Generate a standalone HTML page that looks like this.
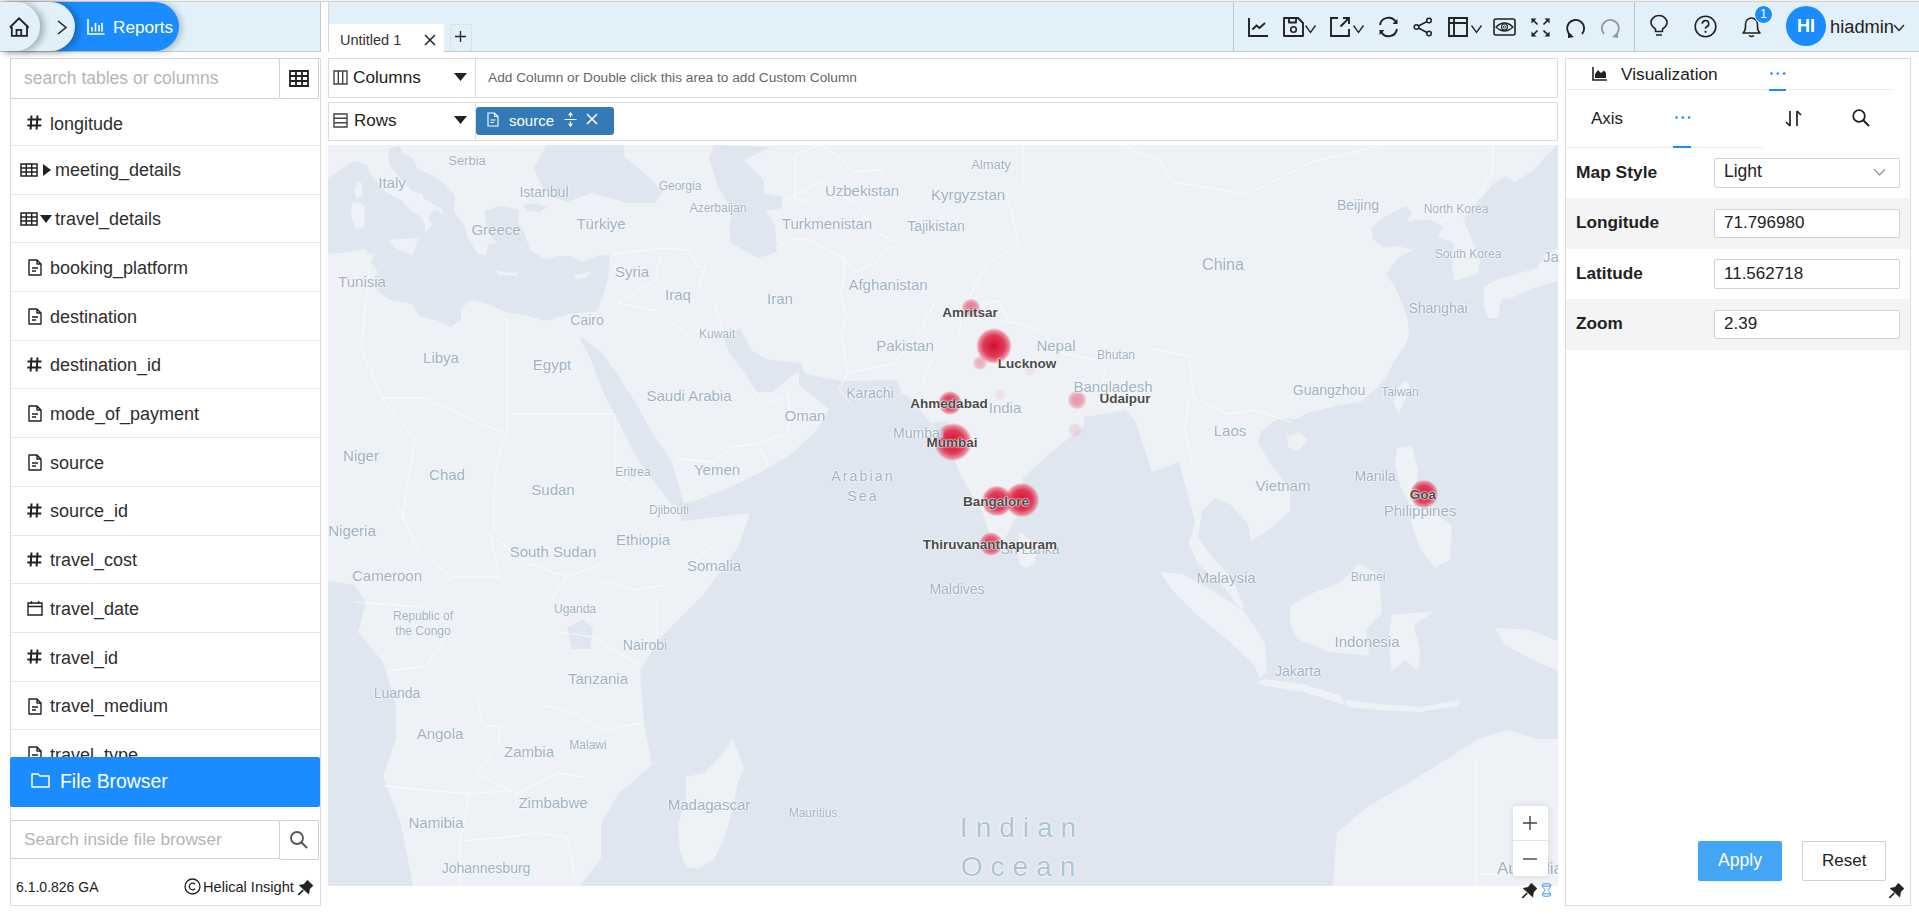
<!DOCTYPE html>
<html><head><meta charset="utf-8">
<style>
*{box-sizing:border-box;margin:0;padding:0}
html,body{width:1919px;height:914px;overflow:hidden;background:#fff;font-family:"Liberation Sans",sans-serif;color:#222;position:relative}
.a{position:absolute}
.t{white-space:nowrap;line-height:1}
svg{display:block;overflow:visible}
.ml{position:absolute;white-space:nowrap;line-height:1;color:#9db1c3;font-size:14px;text-shadow:0 0 2px #fff,0 0 2px #fff,0 0 1px #fff}
.cl{position:absolute;white-space:nowrap;line-height:1;color:#4a4a4a;font-size:13.5px;font-weight:bold;text-shadow:0 0 2px #fff,0 0 2px #fff,0 0 1px #fff}
</style></head><body>
<!-- TOP BAR -->
<div class="a" style="left:0;top:0;width:1919px;height:1px;background:#f2f2f2"></div>
<div class="a" style="left:0;top:1px;width:1919px;height:1px;background:#d4d4d4"></div>
<div class="a" style="left:0;top:2px;width:1919px;height:49px;background:#e1f0f9"></div>
<div class="a" style="left:0;top:51px;width:1919px;height:1px;background:#c9c9c9"></div>

<!-- breadcrumb -->
<div class="a" style="left:20px;top:2px;width:159px;height:49px;background:#1a8cff;border-radius:0 25px 25px 0;box-shadow:3px 1px 6px rgba(0,0,0,.22)"></div>
<div class="a" style="left:0;top:2px;width:75px;height:49px;background:#e1f0f9;border-radius:0 25px 25px 0;box-shadow:4px 1px 7px rgba(0,0,0,.28)"></div>
<div class="a" style="left:0;top:2px;width:40px;height:49px;background:#e1f0f9;border-radius:0 25px 25px 0;box-shadow:4px 1px 7px rgba(0,0,0,.28)"></div>
<div class="a" style="left:9px;top:17px"><svg width="21" height="20" viewBox="0 0 21 20"><path d="M0.9 10.5L10 1.3L19.6 10.5 M0.9 10.5H3 M17.3 10.5H19.6 M2.8 10V18.8H18V10 M7.5 18.8V12.8H12.2V18.8" stroke="#222" stroke-width="1.8" fill="none" stroke-linejoin="miter"/></svg></div>
<div class="a" style="left:57px;top:20px"><svg width="10" height="15" viewBox="0 0 10 15"><path d="M1 1L9 7.5L1 14" stroke="#222" stroke-width="1.5" fill="none"/></svg></div>
<div class="a" style="left:87px;top:19px"><svg width="18" height="16" viewBox="0 0 18 16"><path d="M1 0V15H17.5 M5 8V12.5 M8.5 4V12.5 M12 6V12.5 M15 4V12.5" stroke="#fff" stroke-width="1.6" fill="none"/></svg></div>
<div class="a t" style="left:113px;top:19px;font-size:17.2px;color:#fff">Reports</div>

<!-- TABS -->
<div class="a" style="left:320px;top:2px;width:1px;height:49px;background:#c8c8c8"></div>
<div class="a" style="left:321px;top:2px;width:7px;height:50px;background:#fff"></div>
<div class="a" style="left:328px;top:2px;width:1px;height:50px;background:#d8d8d8"></div>
<div class="a" style="left:329px;top:24px;width:115px;height:28px;background:#fff;border-radius:3px 3px 0 0"></div>
<div class="a t" style="left:340px;top:33px;font-size:14.5px;color:#333">Untitled 1</div>
<div class="a" style="left:424px;top:34px"><svg width="12" height="12" viewBox="0 0 12 12"><path d="M1 1L11 11M11 1L1 11" stroke="#222" stroke-width="1.5"/></svg></div>
<div class="a" style="left:450px;top:24px;width:22px;height:27px;border:1px solid #d6e3ec;border-bottom:none"></div>
<div class="a" style="left:455px;top:31px"><svg width="11" height="11" viewBox="0 0 11 11"><path d="M5.5 0V11M0 5.5H11" stroke="#222" stroke-width="1.3"/></svg></div>

<!-- toolbar dividers -->
<div class="a" style="left:1233px;top:2px;width:1px;height:49px;background:#c4c4c4"></div>
<div class="a" style="left:1634px;top:2px;width:1px;height:49px;background:#c4c4c4"></div>
<!-- TOOLBAR ICONS -->
<div class="a" style="left:1248px;top:18px"><svg width="21" height="19" viewBox="0 0 21 19"><path d="M1 0V18H20 M4.5 11.5L8.5 7.5L11.5 10L17 5" stroke="#222" stroke-width="1.9" fill="none"/></svg></div>
<div class="a" style="left:1283px;top:17px"><svg width="33" height="20" viewBox="0 0 33 20"><path d="M1 1H15L20 6V19H1Z M6 1V5.5H13V1" stroke="#222" stroke-width="1.9" fill="none" stroke-linejoin="round"/><circle cx="10.5" cy="12.5" r="2.8" stroke="#222" stroke-width="1.6" fill="none"/><path d="M22.5 8.5L27.5 15.5L32.5 8.5" stroke="#222" stroke-width="1.3" fill="none"/></svg></div>
<div class="a" style="left:1330px;top:17px"><svg width="34" height="20" viewBox="0 0 34 20"><path d="M8 1H1V19H19V12 M10.5 9.5L19 1 M13 1H19V7" stroke="#222" stroke-width="1.9" fill="none"/><path d="M23.5 8.5L28.5 15.5L33.5 8.5" stroke="#222" stroke-width="1.3" fill="none"/></svg></div>
<div class="a" style="left:1377px;top:16px"><svg width="23" height="22" viewBox="0 0 23 22"><path d="M3 9A8.5 8.5 0 0 1 19 6.5 M20 13A8.5 8.5 0 0 1 4 15.5" stroke="#222" stroke-width="1.9" fill="none"/><path d="M20.5 3V8H15.5Z M2.5 19V14H7.5Z" fill="#222"/></svg></div>
<div class="a" style="left:1413px;top:17px"><svg width="20" height="20" viewBox="0 0 20 20"><circle cx="16" cy="3.5" r="2.3" stroke="#222" stroke-width="1.5" fill="none"/><circle cx="3.5" cy="10" r="2.3" stroke="#222" stroke-width="1.5" fill="none"/><circle cx="16" cy="16.5" r="2.3" stroke="#222" stroke-width="1.5" fill="none"/><path d="M5.5 9L14 4.5 M5.5 11L14 15.5" stroke="#222" stroke-width="1.5"/></svg></div>
<div class="a" style="left:1448px;top:17px"><svg width="34" height="20" viewBox="0 0 34 20"><path d="M1 1H19V19H1Z M1 6H19 M6 1V19" stroke="#222" stroke-width="1.9" fill="none"/><path d="M23.5 8.5L28.5 15.5L33.5 8.5" stroke="#222" stroke-width="1.3" fill="none"/></svg></div>
<div class="a" style="left:1493px;top:18px"><svg width="23" height="18" viewBox="0 0 23 18"><rect x="1" y="1" width="21" height="16" rx="2" stroke="#222" stroke-width="1.6" fill="none"/><path d="M3 9Q11.5 1 20 9Q11.5 17 3 9Z" stroke="#222" stroke-width="1.3" fill="none"/><circle cx="11.5" cy="9" r="3" stroke="#222" stroke-width="1.1" fill="none"/><circle cx="11.5" cy="9" r="1.2" stroke="#222" stroke-width=".8" fill="none"/></svg></div>
<div class="a" style="left:1531px;top:18px"><svg width="19" height="19" viewBox="0 0 19 19"><path d="M1 1L6.5 6.5 M18 1L12.5 6.5 M1 18L6.5 12.5 M18 18L12.5 12.5" stroke="#222" stroke-width="1.7"/><path d="M0.5 0.5H5.5L0.5 5.5Z M18.5 0.5H13.5L18.5 5.5Z M0.5 18.5H5.5L0.5 13.5Z M18.5 18.5H13.5L18.5 13.5Z" fill="#222"/></svg></div>
<div class="a" style="left:1565px;top:18px"><svg width="21" height="20" viewBox="0 0 21 20"><path d="M6 17.5A8.5 8.5 0 1 1 17 16" stroke="#222" stroke-width="1.9" fill="none"/><path d="M3 14L9 19L3 20Z" fill="#222"/></svg></div>
<div class="a" style="left:1600px;top:18px"><svg width="21" height="20" viewBox="0 0 21 20"><path d="M15 17.5A8.5 8.5 0 1 0 4 16" stroke="#999" stroke-width="1.9" fill="none"/><path d="M18 14L12 19L18 20Z" fill="#999"/></svg></div>
<div class="a" style="left:1650px;top:15px"><svg width="18" height="23" viewBox="0 0 18 23"><path d="M5.5 16.5V14Q1 11 1 7.5A8 7 0 0 1 17 7.5Q17 11 12.5 14V16.5Z M6 20H12" stroke="#222" stroke-width="1.6" fill="none" stroke-linejoin="round"/></svg></div>
<div class="a" style="left:1694px;top:15px"><svg width="23" height="23" viewBox="0 0 23 23"><circle cx="11.5" cy="11.5" r="10.3" stroke="#222" stroke-width="1.6" fill="none"/><path d="M8.3 8.8A3.2 3.2 0 1 1 12.5 11.8Q11.5 12.3 11.5 13.8" stroke="#222" stroke-width="1.6" fill="none"/><circle cx="11.5" cy="16.8" r="1.1" fill="#222"/></svg></div>
<div class="a" style="left:1742px;top:15px"><svg width="19" height="23" viewBox="0 0 19 23"><path d="M1 18H18Q15.5 16 15.5 12V9A6 6 0 0 0 3.5 9V12Q3.5 16 1 18Z M7 20.5Q9.5 22.5 12 20.5" stroke="#222" stroke-width="1.6" fill="none" stroke-linejoin="round"/></svg></div>
<div class="a" style="left:1754px;top:5px;width:19px;height:19px;border-radius:50%;background:#1a8cff;border:1.5px solid #fff"></div>
<div class="a t" style="left:1754px;top:8px;width:19px;text-align:center;font-size:12.5px;color:#fff">1</div>
<div class="a" style="left:1786px;top:6px;width:40px;height:40px;border-radius:50%;background:#1a8cff"></div>
<div class="a t" style="left:1786px;top:17px;width:40px;text-align:center;font-size:18px;font-weight:bold;color:#fff">HI</div>
<div class="a t" style="left:1830px;top:18px;font-size:18.3px;color:#222">hiadmin</div>
<div class="a" style="left:1893px;top:24px"><svg width="12" height="8" viewBox="0 0 12 8"><path d="M1 1L6 6.5L11 1" stroke="#222" stroke-width="1.3" fill="none"/></svg></div>
<!-- LEFT PANEL -->
<div class="a" style="left:10px;top:58px;width:311px;height:848px;border:1px solid #dcdcdc;background:#fff"></div>
<div class="a" style="left:10px;top:58px;width:270px;height:41px;border:1px solid #d2d2d2;border-radius:2px"></div>
<div class="a t" style="left:24px;top:70px;font-size:17.5px;color:#b5b5b5">search tables or columns</div>
<div class="a" style="left:279px;top:58px;width:40px;height:41px;border:1px solid #d2d2d2;border-radius:2px"></div>
<div class="a" style="left:289px;top:70px"><svg width="20" height="17" viewBox="0 0 20 17"><path d="M1 1H19V16H1Z M1 6H19 M1 11H19 M7 1V16 M13 1V16" stroke="#222" stroke-width="1.8" fill="none"/></svg></div>
<div class="a" style="left:27px;top:115px"><svg width="15" height="15" viewBox="0 0 15 15"><path d="M4.5 0.5L3.6 14.5M10.5 0.5L9.6 14.5M0.5 4.6H14.5M0.3 10.4H14.3" stroke="#222" stroke-width="2" fill="none"/></svg></div>
<div class="a t" style="left:50px;top:114.5px;font-size:18px;color:#2e2e2e">longitude</div>
<div class="a" style="left:11px;top:144.8px;width:309px;height:1px;background:#e6e6e6"></div>
<div class="a" style="left:20px;top:162.8px"><svg width="18" height="14" viewBox="0 0 18 14"><path d="M1 1H17V13H1Z M1 5H17 M1 9H17 M6.3 1V13 M11.7 1V13" stroke="#222" stroke-width="1.5" fill="none"/></svg></div>
<div class="a" style="left:42px;top:163.8px"><svg width="10" height="12" viewBox="0 0 10 12"><path d="M1 0L9 6L1 12Z" fill="#222"/></svg></div>
<div class="a t" style="left:55px;top:161.3px;font-size:18px;color:#2e2e2e">meeting_details</div>
<div class="a" style="left:11px;top:193.5px;width:309px;height:1px;background:#e6e6e6"></div>
<div class="a" style="left:20px;top:211.5px"><svg width="18" height="14" viewBox="0 0 18 14"><path d="M1 1H17V13H1Z M1 5H17 M1 9H17 M6.3 1V13 M11.7 1V13" stroke="#222" stroke-width="1.5" fill="none"/></svg></div>
<div class="a" style="left:40px;top:213.5px"><svg width="12" height="10" viewBox="0 0 12 10"><path d="M0 1H12L6 9Z" fill="#222"/></svg></div>
<div class="a t" style="left:55px;top:210.0px;font-size:18px;color:#2e2e2e">travel_details</div>
<div class="a" style="left:11px;top:242.2px;width:309px;height:1px;background:#e6e6e6"></div>
<div class="a" style="left:28px;top:259.2px"><svg width="14" height="17" viewBox="0 0 14 17"><path d="M1 1H9L13 5V16H1Z M9 1V5H13 M4 9H10 M4 12H8" stroke="#222" stroke-width="1.4" fill="none" stroke-linejoin="round"/></svg></div>
<div class="a t" style="left:50px;top:258.7px;font-size:18px;color:#2e2e2e">booking_platform</div>
<div class="a" style="left:11px;top:290.9px;width:309px;height:1px;background:#e6e6e6"></div>
<div class="a" style="left:28px;top:308.0px"><svg width="14" height="17" viewBox="0 0 14 17"><path d="M1 1H9L13 5V16H1Z M9 1V5H13 M4 9H10 M4 12H8" stroke="#222" stroke-width="1.4" fill="none" stroke-linejoin="round"/></svg></div>
<div class="a t" style="left:50px;top:307.5px;font-size:18px;color:#2e2e2e">destination</div>
<div class="a" style="left:11px;top:339.7px;width:309px;height:1px;background:#e6e6e6"></div>
<div class="a" style="left:27px;top:356.7px"><svg width="15" height="15" viewBox="0 0 15 15"><path d="M4.5 0.5L3.6 14.5M10.5 0.5L9.6 14.5M0.5 4.6H14.5M0.3 10.4H14.3" stroke="#222" stroke-width="2" fill="none"/></svg></div>
<div class="a t" style="left:50px;top:356.2px;font-size:18px;color:#2e2e2e">destination_id</div>
<div class="a" style="left:11px;top:388.4px;width:309px;height:1px;background:#e6e6e6"></div>
<div class="a" style="left:28px;top:405.4px"><svg width="14" height="17" viewBox="0 0 14 17"><path d="M1 1H9L13 5V16H1Z M9 1V5H13 M4 9H10 M4 12H8" stroke="#222" stroke-width="1.4" fill="none" stroke-linejoin="round"/></svg></div>
<div class="a t" style="left:50px;top:404.9px;font-size:18px;color:#2e2e2e">mode_of_payment</div>
<div class="a" style="left:11px;top:437.1px;width:309px;height:1px;background:#e6e6e6"></div>
<div class="a" style="left:28px;top:454.1px"><svg width="14" height="17" viewBox="0 0 14 17"><path d="M1 1H9L13 5V16H1Z M9 1V5H13 M4 9H10 M4 12H8" stroke="#222" stroke-width="1.4" fill="none" stroke-linejoin="round"/></svg></div>
<div class="a t" style="left:50px;top:453.6px;font-size:18px;color:#2e2e2e">source</div>
<div class="a" style="left:11px;top:485.8px;width:309px;height:1px;background:#e6e6e6"></div>
<div class="a" style="left:27px;top:502.8px"><svg width="15" height="15" viewBox="0 0 15 15"><path d="M4.5 0.5L3.6 14.5M10.5 0.5L9.6 14.5M0.5 4.6H14.5M0.3 10.4H14.3" stroke="#222" stroke-width="2" fill="none"/></svg></div>
<div class="a t" style="left:50px;top:502.3px;font-size:18px;color:#2e2e2e">source_id</div>
<div class="a" style="left:11px;top:534.5px;width:309px;height:1px;background:#e6e6e6"></div>
<div class="a" style="left:27px;top:551.6px"><svg width="15" height="15" viewBox="0 0 15 15"><path d="M4.5 0.5L3.6 14.5M10.5 0.5L9.6 14.5M0.5 4.6H14.5M0.3 10.4H14.3" stroke="#222" stroke-width="2" fill="none"/></svg></div>
<div class="a t" style="left:50px;top:551.1px;font-size:18px;color:#2e2e2e">travel_cost</div>
<div class="a" style="left:11px;top:583.3px;width:309px;height:1px;background:#e6e6e6"></div>
<div class="a" style="left:27px;top:600.3px"><svg width="16" height="16" viewBox="0 0 16 16"><path d="M1 3H15V15H1Z M1 6.5H15 M4.5 1V4 M11.5 1V4" stroke="#222" stroke-width="1.4" fill="none"/></svg></div>
<div class="a t" style="left:50px;top:599.8px;font-size:18px;color:#2e2e2e">travel_date</div>
<div class="a" style="left:11px;top:632.0px;width:309px;height:1px;background:#e6e6e6"></div>
<div class="a" style="left:27px;top:649.0px"><svg width="15" height="15" viewBox="0 0 15 15"><path d="M4.5 0.5L3.6 14.5M10.5 0.5L9.6 14.5M0.5 4.6H14.5M0.3 10.4H14.3" stroke="#222" stroke-width="2" fill="none"/></svg></div>
<div class="a t" style="left:50px;top:648.5px;font-size:18px;color:#2e2e2e">travel_id</div>
<div class="a" style="left:11px;top:680.7px;width:309px;height:1px;background:#e6e6e6"></div>
<div class="a" style="left:28px;top:697.7px"><svg width="14" height="17" viewBox="0 0 14 17"><path d="M1 1H9L13 5V16H1Z M9 1V5H13 M4 9H10 M4 12H8" stroke="#222" stroke-width="1.4" fill="none" stroke-linejoin="round"/></svg></div>
<div class="a t" style="left:50px;top:697.2px;font-size:18px;color:#2e2e2e">travel_medium</div>
<div class="a" style="left:11px;top:729.4px;width:309px;height:1px;background:#e6e6e6"></div>
<div class="a" style="left:28px;top:746.4px"><svg width="14" height="17" viewBox="0 0 14 17"><path d="M1 1H9L13 5V16H1Z M9 1V5H13 M4 9H10 M4 12H8" stroke="#222" stroke-width="1.4" fill="none" stroke-linejoin="round"/></svg></div>
<div class="a t" style="left:50px;top:745.9px;font-size:18px;color:#2e2e2e">travel_type</div>
<div class="a" style="left:10px;top:757px;width:310px;height:50px;background:#1a8cff;border-radius:2px"></div>
<div class="a" style="left:31px;top:773px"><svg width="19" height="15" viewBox="0 0 19 15"><path d="M1 1H7L9 3H18V14H1Z" stroke="#fff" stroke-width="1.5" fill="none" stroke-linejoin="round"/></svg></div>
<div class="a t" style="left:60px;top:772px;font-size:19.4px;color:#fff">File Browser</div>
<div class="a" style="left:10px;top:820px;width:270px;height:39px;border:1px solid #d2d2d2;border-radius:2px"></div>
<div class="a t" style="left:24px;top:831px;font-size:17.3px;color:#b5b5b5">Search inside file browser</div>
<div class="a" style="left:279px;top:820px;width:40px;height:40px;border:1px solid #d2d2d2;border-radius:2px"></div>
<div class="a" style="left:289px;top:830px"><svg width="20" height="20" viewBox="0 0 20 20"><circle cx="8" cy="8" r="6" stroke="#555" stroke-width="1.8" fill="none"/><path d="M12.5 12.5L18 18" stroke="#555" stroke-width="2"/></svg></div>
<div class="a t" style="left:16px;top:880px;font-size:14px;color:#222">6.1.0.826 GA</div>
<div class="a" style="left:184px;top:878px"><svg width="17" height="17" viewBox="0 0 17 17"><circle cx="8.5" cy="8.5" r="7.5" stroke="#222" stroke-width="1.3" fill="none"/><path d="M11 6.2A3.3 3.3 0 1 0 11 10.8" stroke="#222" stroke-width="1.3" fill="none"/></svg></div>
<div class="a t" style="left:203px;top:880px;font-size:14.6px;color:#222">Helical Insight</div>
<div class="a" style="left:297px;top:879px"><svg width="17" height="17" viewBox="0 0 17 17"><path d="M10.4 1.2L16 6.6L12.6 9.9L11.7 15.1L2.2 6.3L7.1 5.3Z" fill="#222" stroke="#222" stroke-width=".6" stroke-linejoin="round"/><path d="M6.2 11.2L1.3 15.8" stroke="#222" stroke-width="1.7"/></svg></div>
<!-- MIDDLE -->
<div class="a" style="left:328px;top:58px;width:1230px;height:40px;border:1px solid #dcdcdc;background:#fff"></div>
<div class="a" style="left:475px;top:58px;width:1px;height:40px;background:#dcdcdc"></div>
<div class="a" style="left:333px;top:70px"><svg width="15" height="15" viewBox="0 0 15 15"><path d="M1 1H14V14H1Z M5.3 1V14 M9.7 1V14" stroke="#444" stroke-width="1.4" fill="none"/></svg></div>
<div class="a t" style="left:353px;top:69px;font-size:17.2px;color:#222">Columns</div>
<div class="a" style="left:454px;top:73px"><svg width="13" height="8" viewBox="0 0 13 8"><path d="M0 0H13L6.5 8Z" fill="#222"/></svg></div>
<div class="a t" style="left:488px;top:71px;font-size:13.7px;color:#666">Add Column or Double click this area to add Custom Column</div>
<div class="a" style="left:328px;top:102px;width:1230px;height:39px;border:1px solid #dcdcdc;background:#fff"></div>
<div class="a" style="left:475px;top:102px;width:1px;height:39px;background:#dcdcdc"></div>
<div class="a" style="left:333px;top:113px"><svg width="15" height="15" viewBox="0 0 15 15"><path d="M1 1H14V14H1Z M1 5.3H14 M1 9.7H14" stroke="#444" stroke-width="1.4" fill="none"/></svg></div>
<div class="a t" style="left:354px;top:112px;font-size:17px;color:#222">Rows</div>
<div class="a" style="left:454px;top:116px"><svg width="13" height="8" viewBox="0 0 13 8"><path d="M0 0H13L6.5 8Z" fill="#222"/></svg></div>
<div class="a" style="left:476px;top:107px;width:138px;height:28px;background:#337ab7;border-radius:3px"></div>
<div class="a" style="left:487px;top:112px"><svg width="12" height="15" viewBox="0 0 12 15"><path d="M1 1H7.5L11 4.5V14H1Z M7.5 1V4.5H11 M3.5 8H8.5 M3.5 10.5H7" stroke="#fff" stroke-width="1.1" fill="none"/></svg></div>
<div class="a t" style="left:509px;top:113px;font-size:15px;color:#fff">source</div>
<div class="a" style="left:564px;top:112px"><svg width="13" height="15" viewBox="0 0 13 15"><path d="M0.5 7.5H12.5 M6.5 1V5.5 M6.5 9.5V14 M4.5 3.5L6.5 1L8.5 3.5 M4.5 11.5L6.5 14L8.5 11.5" stroke="#fff" stroke-width="1.1" fill="none"/></svg></div>
<div class="a" style="left:586px;top:113px"><svg width="12" height="12" viewBox="0 0 12 12"><path d="M1 1L11 11M11 1L1 11" stroke="#fff" stroke-width="1.5"/></svg></div>
<div class="a" style="left:328px;top:145px;width:1230px;height:741px;overflow:hidden;background:#eef1f5">
<svg class="a" style="left:0;top:0" width="1230" height="741" viewBox="0 0 1230 741">
<defs><radialGradient id="hb"><stop offset="0" stop-color="#d0102f" stop-opacity="1"/><stop offset=".6" stop-color="#e02a4a" stop-opacity=".92"/><stop offset=".85" stop-color="#e63a58" stop-opacity=".55"/><stop offset="1" stop-color="#ea4a66" stop-opacity="0"/></radialGradient></defs>
<rect width="1230" height="741" fill="#eef1f5"/>
<polygon points="0.0,33.0 8.0,28.0 26.0,16.0 39.0,20.0 42.0,29.0 58.0,47.0 74.0,56.0 85.0,68.0 92.0,71.0 97.0,79.0 97.0,89.0 92.0,96.0 100.0,84.0 105.0,79.0 100.0,74.0 104.0,66.0 108.0,64.0 116.0,71.0 114.0,64.0 105.0,59.0 95.0,53.0 95.0,49.0 84.0,46.0 74.0,35.0 62.0,21.0 60.0,10.0 62.0,3.0 72.0,1.0 75.0,8.0 85.0,13.0 89.0,24.0 108.0,32.0 118.0,41.0 127.0,50.0 126.0,66.0 131.0,74.0 137.0,81.0 139.0,92.0 144.0,100.0 150.0,109.0 158.0,110.0 160.0,100.0 169.0,98.0 163.0,92.0 158.0,79.0 156.0,66.0 173.0,61.0 191.0,65.0 190.0,78.0 196.0,87.0 199.0,96.0 202.0,105.0 217.0,114.0 230.0,111.0 242.0,111.0 254.0,117.0 269.0,111.0 282.0,110.0 280.0,134.0 276.0,148.0 269.0,166.0 242.0,169.0 217.0,176.0 200.0,171.0 177.0,167.0 160.0,159.0 144.0,155.0 133.0,163.0 133.0,175.0 123.0,182.0 108.0,175.0 92.0,171.0 84.0,159.0 62.0,155.0 49.0,146.0 49.0,125.0 43.0,118.0 47.0,108.0 42.0,110.0 37.0,104.0 13.0,108.0 0.0,109.0" fill="#e0e6ef"/>
<polygon points="196.0,60.0 207.0,58.0 219.0,62.0 212.0,67.0 198.0,66.0" fill="#e0e6ef"/>
<polygon points="219.0,0.0 296.0,0.0 296.0,11.0 316.0,28.0 335.0,46.0 327.0,58.0 300.0,58.0 263.0,48.0 239.0,57.0 219.0,50.0 210.0,33.0 206.0,22.0" fill="#e0e6ef"/>
<polygon points="386.0,0.0 443.0,2.0 416.0,15.0 436.0,35.0 436.0,48.0 454.0,52.0 454.0,63.0 438.0,66.0 447.0,81.0 449.0,107.0 430.0,113.0 403.0,98.0 401.0,83.0 405.0,66.0 390.0,42.0 381.0,13.0" fill="#e0e6ef"/>
<polygon points="252.0,194.0 261.0,210.0 276.0,249.0 291.0,278.0 309.0,313.0 326.0,337.0 344.0,360.0 356.0,360.0 344.0,317.0 326.0,291.0 309.0,260.0 291.0,232.0 274.0,208.0 254.0,192.0" fill="#e0e6ef"/>
<polygon points="0.0,436.0 26.0,440.0 38.0,457.0 30.0,487.0 55.0,517.0 68.0,560.0 68.0,594.0 55.0,632.0 73.0,679.0 85.0,741.0 0.0,741.0" fill="#e0e6ef"/>
<polygon points="348.0,360.0 370.0,355.0 405.0,341.0 431.0,328.0 462.0,310.0 488.0,286.0 501.0,264.0 471.0,240.0 471.0,227.0 462.0,232.0 445.0,247.0 429.0,247.0 414.0,225.0 401.0,207.0 396.0,194.0 412.0,183.0 423.0,205.0 438.0,214.0 473.0,218.0 477.0,229.0 515.0,236.0 568.0,235.0 574.0,248.0 590.0,259.0 594.0,268.0 603.0,278.0 620.0,276.0 620.0,298.0 633.0,331.0 655.0,368.0 664.0,397.0 677.0,394.0 690.0,368.0 695.0,333.0 721.0,309.0 756.0,281.0 756.0,272.0 782.0,268.0 798.0,265.0 808.0,278.0 824.0,327.0 851.0,317.0 857.0,340.0 867.0,376.0 861.0,399.0 870.0,419.0 893.0,438.0 913.0,465.0 916.0,461.0 903.0,432.0 884.0,412.0 870.0,393.0 874.0,366.0 887.0,353.0 903.0,360.0 920.0,379.0 923.0,396.0 943.0,383.0 962.0,366.0 962.0,343.0 943.0,320.0 930.0,297.0 933.0,287.0 949.0,274.0 969.0,274.0 979.0,268.0 1008.0,261.0 1034.0,256.0 1048.0,244.0 1060.0,229.0 1066.0,216.0 1078.0,199.0 1081.0,189.0 1080.0,175.0 1075.0,160.0 1067.0,142.0 1058.0,129.0 1071.0,112.0 1086.0,105.0 1069.0,101.0 1056.0,103.0 1045.0,94.0 1043.0,83.0 1056.0,72.0 1078.0,61.0 1084.0,68.0 1078.0,77.0 1100.0,74.0 1115.0,81.0 1110.0,92.0 1126.0,98.0 1124.0,123.0 1126.0,136.0 1150.0,129.0 1152.0,114.0 1141.0,88.0 1135.0,74.0 1154.0,52.0 1165.0,39.0 1178.0,31.0 1187.0,37.0 1205.0,26.0 1222.0,7.0 1230.0,0.0 1230.0,741.0 252.0,741.0 273.0,714.0 273.0,679.0 290.0,649.0 324.0,620.0 316.0,577.0 312.0,526.0 333.0,492.0 376.0,449.0 410.0,402.0 422.0,368.0 354.0,376.0" fill="#e0e6ef"/>
<polygon points="405.0,594.0 416.0,624.0 410.0,637.0 405.0,662.0 397.0,692.0 386.0,714.0 371.0,724.0 358.0,722.0 352.0,705.0 350.0,679.0 358.0,654.0 358.0,632.0 376.0,628.0 393.0,611.0" fill="#eef1f5"/>
<polygon points="692.0,387.0 702.0,395.0 708.0,407.0 707.0,418.0 699.0,423.0 692.0,420.0 689.0,405.0" fill="#eef1f5"/>
<polygon points="832.0,427.0 844.0,445.0 870.0,471.0 903.0,498.0 926.0,520.0 932.0,533.0 939.0,527.0 937.0,498.0 917.0,467.0 882.0,444.0 854.0,429.0" fill="#eef1f5"/>
<polygon points="928.0,539.0 975.0,547.0 1017.0,560.0 1013.0,551.0 975.0,539.0 936.0,534.0" fill="#eef1f5"/>
<polygon points="1017.0,555.0 1052.0,559.0 1092.0,562.0 1132.0,555.0 1130.0,561.0 1092.0,567.0 1052.0,565.0 1020.0,562.0" fill="#eef1f5"/>
<polygon points="962.0,461.0 985.0,448.0 1012.0,438.0 1031.0,419.0 1051.0,429.0 1054.0,468.0 1038.0,484.0 1041.0,511.0 1002.0,507.0 969.0,494.0 962.0,478.0" fill="#eef1f5"/>
<polygon points="1064.0,470.0 1107.0,466.0 1086.0,480.0 1092.0,505.0 1090.0,526.0 1077.0,515.0 1064.0,526.0 1060.0,496.0" fill="#eef1f5"/>
<polygon points="1167.0,483.0 1202.0,485.0 1230.0,496.0 1230.0,526.0 1201.0,513.0 1177.0,500.0" fill="#eef1f5"/>
<polygon points="1005.0,741.0 1009.0,688.0 1039.0,662.0 1082.0,637.0 1124.0,611.0 1150.0,594.0 1180.0,585.0 1210.0,594.0 1230.0,594.0 1230.0,741.0" fill="#eef1f5"/>
<polygon points="1069.0,303.0 1084.0,301.0 1090.0,325.0 1087.0,345.0 1097.0,355.0 1082.0,361.0 1072.0,340.0 1067.0,320.0" fill="#eef1f5"/>
<polygon points="1081.0,360.0 1102.0,365.0 1124.0,380.0 1122.0,415.0 1107.0,423.0 1092.0,403.0 1084.0,380.0" fill="#eef1f5"/>
<polygon points="1077.0,236.0 1082.0,240.0 1077.0,255.0 1071.0,268.0 1065.0,258.0 1068.0,245.0" fill="#eef1f5"/>
<polygon points="959.0,291.0 972.0,288.0 980.0,295.0 970.0,306.0 960.0,302.0" fill="#eef1f5"/>
<polygon points="1156.0,142.0 1168.0,135.0 1209.0,123.0 1218.0,109.0 1230.0,103.0 1230.0,136.0 1209.0,142.0 1183.0,153.0 1173.0,154.0 1170.0,173.0 1160.0,173.0 1156.0,160.0" fill="#eef1f5"/>
<polygon points="62.0,95.0 72.0,94.0 90.0,93.0 87.0,103.0 85.0,111.0 76.0,107.0 66.0,102.0" fill="#eef1f5"/>
<polygon points="24.0,58.0 32.0,57.0 37.0,61.0 36.0,83.0 28.0,84.0 23.0,70.0" fill="#eef1f5"/>
<polygon points="29.0,37.0 34.0,38.0 34.0,51.0 29.0,54.0 26.0,45.0" fill="#eef1f5"/>
<polygon points="166.0,125.0 177.0,127.0 190.0,128.0 188.0,131.0 172.0,130.0" fill="#eef1f5"/>
<polygon points="246.0,130.0 257.0,128.0 263.0,126.0 258.0,133.0 248.0,134.0" fill="#eef1f5"/>
<polygon points="239.0,483.0 255.0,474.0 265.0,483.0 262.0,504.0 244.0,504.0" fill="#e0e6ef"/>
<polyline points="285.0,109.0 338.0,103.0 360.0,105.0" fill="none" stroke="#fff" stroke-width="1" opacity=".7"/>
<polyline points="338.0,103.0 331.0,114.0 327.0,136.0 290.0,158.0" fill="none" stroke="#fff" stroke-width="1" opacity=".7"/>
<polyline points="360.0,105.0 368.0,120.0 377.0,123.0 370.0,142.0 386.0,158.0 392.0,175.0 395.0,186.0" fill="none" stroke="#fff" stroke-width="1" opacity=".7"/>
<polyline points="290.0,158.0 309.0,162.0 329.0,166.0 364.0,193.0" fill="none" stroke="#fff" stroke-width="1" opacity=".7"/>
<polyline points="449.0,103.0 462.0,94.0 480.0,94.0 502.0,107.0 515.0,112.0" fill="none" stroke="#fff" stroke-width="1" opacity=".7"/>
<polyline points="515.0,112.0 517.0,127.0 513.0,149.0 519.0,173.0 513.0,188.0 520.0,228.0" fill="none" stroke="#fff" stroke-width="1" opacity=".7"/>
<polyline points="515.0,112.0 528.0,127.0 548.0,118.0 559.0,101.0 572.0,105.0" fill="none" stroke="#fff" stroke-width="1" opacity=".7"/>
<polyline points="467.0,9.0 467.0,55.0 480.0,55.0" fill="none" stroke="#fff" stroke-width="1" opacity=".7"/>
<polyline points="456.0,57.0 491.0,37.0 526.0,57.0 548.0,87.0 565.0,96.0" fill="none" stroke="#fff" stroke-width="1" opacity=".7"/>
<polyline points="467.0,9.0 493.0,0.0" fill="none" stroke="#fff" stroke-width="1" opacity=".7"/>
<polyline points="493.0,0.0 513.0,13.0 524.0,27.0 552.0,25.0 559.0,35.0" fill="none" stroke="#fff" stroke-width="1" opacity=".7"/>
<polyline points="162.0,389.0 201.0,419.0 239.0,432.0 273.0,419.0" fill="none" stroke="#fff" stroke-width="1" opacity=".7"/>
<polyline points="239.0,432.0 222.0,457.0" fill="none" stroke="#fff" stroke-width="1" opacity=".7"/>
<polyline points="273.0,436.0 307.0,445.0 337.0,440.0 384.0,402.0" fill="none" stroke="#fff" stroke-width="1" opacity=".7"/>
<polyline points="329.0,453.0 329.0,492.0" fill="none" stroke="#fff" stroke-width="1" opacity=".7"/>
<polyline points="230.0,487.0 265.0,492.0 312.0,521.0" fill="none" stroke="#fff" stroke-width="1" opacity=".7"/>
<polyline points="213.0,560.0 248.0,568.0 273.0,585.0 313.0,578.0" fill="none" stroke="#fff" stroke-width="1" opacity=".7"/>
<polyline points="149.0,547.0 154.0,581.0 171.0,581.0 171.0,598.0 149.0,628.0" fill="none" stroke="#fff" stroke-width="1" opacity=".7"/>
<polyline points="149.0,628.0 188.0,649.0 230.0,628.0 256.0,632.0" fill="none" stroke="#fff" stroke-width="1" opacity=".7"/>
<polyline points="55.0,641.0 141.0,649.0 188.0,645.0" fill="none" stroke="#fff" stroke-width="1" opacity=".7"/>
<polyline points="141.0,649.0 132.0,696.0 132.0,741.0" fill="none" stroke="#fff" stroke-width="1" opacity=".7"/>
<polyline points="132.0,696.0 179.0,692.0 209.0,688.0 239.0,692.0 247.0,731.0" fill="none" stroke="#fff" stroke-width="1" opacity=".7"/>
<polyline points="98.0,462.0 115.0,496.0 98.0,521.0 60.0,526.0" fill="none" stroke="#fff" stroke-width="1" opacity=".7"/>
<polyline points="26.0,457.0 94.0,462.0 124.0,432.0 171.0,432.0 162.0,389.0" fill="none" stroke="#fff" stroke-width="1" opacity=".7"/>
<polyline points="68.0,355.0 90.0,406.0 124.0,432.0" fill="none" stroke="#fff" stroke-width="1" opacity=".7"/>
<polyline points="179.0,173.0 179.0,290.0" fill="none" stroke="#fff" stroke-width="1" opacity=".7"/>
<polyline points="179.0,269.0 287.0,269.0" fill="none" stroke="#fff" stroke-width="1" opacity=".7"/>
<polyline points="179.0,290.0 96.0,253.0 54.0,253.0" fill="none" stroke="#fff" stroke-width="1" opacity=".7"/>
<polyline points="179.0,290.0 170.0,311.0 166.0,348.0 166.0,389.0" fill="none" stroke="#fff" stroke-width="1" opacity=".7"/>
<polyline points="42.0,120.0 33.0,203.0 54.0,253.0" fill="none" stroke="#fff" stroke-width="1" opacity=".7"/>
<polyline points="54.0,253.0 87.0,295.0 74.0,375.0" fill="none" stroke="#fff" stroke-width="1" opacity=".7"/>
<polyline points="348.0,313.0 385.0,317.0 405.0,302.0 431.0,298.0 458.0,288.0 462.0,278.0 462.0,264.0 460.0,251.0" fill="none" stroke="#fff" stroke-width="1" opacity=".7"/>
<polyline points="431.0,298.0 440.0,321.0" fill="none" stroke="#fff" stroke-width="1" opacity=".7"/>
<polyline points="460.0,251.0 436.0,259.0 427.0,247.0" fill="none" stroke="#fff" stroke-width="1" opacity=".7"/>
<polyline points="287.0,269.0 287.0,328.0 303.0,340.0 324.0,357.0" fill="none" stroke="#fff" stroke-width="1" opacity=".7"/>
<polyline points="607.0,157.0 590.0,190.0 565.0,219.0 520.0,228.0" fill="none" stroke="#fff" stroke-width="1" opacity=".7"/>
<polyline points="520.0,228.0 511.0,244.0 524.0,261.0" fill="none" stroke="#fff" stroke-width="1" opacity=".7"/>
<polyline points="634.0,166.0 631.0,190.0 606.0,212.0 594.0,236.0 603.0,242.0" fill="none" stroke="#fff" stroke-width="1" opacity=".7"/>
<polyline points="674.0,175.0 710.0,184.0 735.0,208.0 769.0,215.0" fill="none" stroke="#fff" stroke-width="1" opacity=".7"/>
<polyline points="634.0,166.0 671.0,156.0 680.0,175.0" fill="none" stroke="#fff" stroke-width="1" opacity=".7"/>
<polyline points="778.0,221.0 772.0,245.0 784.0,264.0 808.0,258.0" fill="none" stroke="#fff" stroke-width="1" opacity=".7"/>
<polyline points="791.0,0.0 832.0,16.0 845.0,37.0 920.0,49.0 986.0,16.0 1028.0,7.0 1052.0,0.0" fill="none" stroke="#fff" stroke-width="1" opacity=".7"/>
<polyline points="695.0,0.0 695.0,37.0 679.0,49.0 691.0,99.0 658.0,120.0 634.0,166.0" fill="none" stroke="#fff" stroke-width="1" opacity=".7"/>
<polyline points="820.0,203.0 861.0,211.0 866.0,253.0 899.0,269.0 928.0,265.0 965.0,278.0" fill="none" stroke="#fff" stroke-width="1" opacity=".7"/>
<polyline points="861.0,253.0 857.0,286.0 864.0,315.0" fill="none" stroke="#fff" stroke-width="1" opacity=".7"/>
<polyline points="1165.0,0.0 1165.0,28.0 1140.0,62.0 1111.0,78.0" fill="none" stroke="#fff" stroke-width="1" opacity=".7"/>
<polyline points="1148.0,615.0 1148.0,741.0" fill="none" stroke="#fff" stroke-width="1" opacity=".7"/>
<polyline points="1148.0,729.0 1230.0,729.0" fill="none" stroke="#fff" stroke-width="1" opacity=".7"/>
<circle cx="643" cy="163" r="9.6" fill="url(#hb)" opacity="0.55"/>
<circle cx="666" cy="201" r="18.0" fill="url(#hb)" opacity="1.0"/>
<circle cx="652" cy="218" r="7.2" fill="url(#hb)" opacity="0.3"/>
<circle cx="622" cy="258" r="12.0" fill="url(#hb)" opacity="0.85"/>
<circle cx="625" cy="297" r="19.2" fill="url(#hb)" opacity="1.0"/>
<circle cx="749" cy="255" r="9.6" fill="url(#hb)" opacity="0.4"/>
<circle cx="747" cy="285" r="7.2" fill="url(#hb)" opacity="0.12"/>
<circle cx="669" cy="356" r="15.6" fill="url(#hb)" opacity="0.95"/>
<circle cx="694" cy="355" r="17.4" fill="url(#hb)" opacity="1.0"/>
<circle cx="663" cy="399" r="12.0" fill="url(#hb)" opacity="0.8"/>
<circle cx="1096" cy="349" r="14.4" fill="url(#hb)" opacity="0.95"/>
<circle cx="672" cy="250" r="6.0" fill="url(#hb)" opacity="0.08"/>
<circle cx="702" cy="225" r="6.0" fill="url(#hb)" opacity="0.08"/>
</svg>
<div class="ml" style="left:139px;top:15px;font-size:13px;transform:translate(-50%,-50%)">Serbia</div>
<div class="ml" style="left:64px;top:37px;font-size:15px;transform:translate(-50%,-50%)">Italy</div>
<div class="ml" style="left:216px;top:47px;font-size:14px;transform:translate(-50%,-50%)">Istanbul</div>
<div class="ml" style="left:352px;top:41px;font-size:12px;transform:translate(-50%,-50%)">Georgia</div>
<div class="ml" style="left:390px;top:63px;font-size:12px;transform:translate(-50%,-50%)">Azerbaijan</div>
<div class="ml" style="left:534px;top:45px;font-size:15px;transform:translate(-50%,-50%)">Uzbekistan</div>
<div class="ml" style="left:640px;top:49px;font-size:15px;transform:translate(-50%,-50%)">Kyrgyzstan</div>
<div class="ml" style="left:663px;top:19px;font-size:13px;transform:translate(-50%,-50%)">Almaty</div>
<div class="ml" style="left:499px;top:78px;font-size:15px;transform:translate(-50%,-50%)">Turkmenistan</div>
<div class="ml" style="left:608px;top:81px;font-size:14px;transform:translate(-50%,-50%)">Tajikistan</div>
<div class="ml" style="left:168px;top:84px;font-size:15px;transform:translate(-50%,-50%)">Greece</div>
<div class="ml" style="left:273px;top:78px;font-size:15px;transform:translate(-50%,-50%)">Türkiye</div>
<div class="ml" style="left:34px;top:136px;font-size:15px;transform:translate(-50%,-50%)">Tunisia</div>
<div class="ml" style="left:304px;top:126px;font-size:15px;transform:translate(-50%,-50%)">Syria</div>
<div class="ml" style="left:350px;top:149px;font-size:15px;transform:translate(-50%,-50%)">Iraq</div>
<div class="ml" style="left:452px;top:153px;font-size:15px;transform:translate(-50%,-50%)">Iran</div>
<div class="ml" style="left:560px;top:139px;font-size:15px;transform:translate(-50%,-50%)">Afghanistan</div>
<div class="ml" style="left:1030px;top:60px;font-size:14px;transform:translate(-50%,-50%)">Beijing</div>
<div class="ml" style="left:1128px;top:64px;font-size:12px;transform:translate(-50%,-50%)">North Korea</div>
<div class="ml" style="left:1140px;top:109px;font-size:12px;transform:translate(-50%,-50%)">South Korea</div>
<div class="ml" style="left:1223px;top:111px;font-size:15px;transform:translate(-50%,-50%)">Ja</div>
<div class="ml" style="left:895px;top:120px;font-size:16px;transform:translate(-50%,-50%)">China</div>
<div class="ml" style="left:259px;top:175px;font-size:14px;transform:translate(-50%,-50%)">Cairo</div>
<div class="ml" style="left:577px;top:200px;font-size:15px;transform:translate(-50%,-50%)">Pakistan</div>
<div class="ml" style="left:728px;top:200px;font-size:15px;transform:translate(-50%,-50%)">Nepal</div>
<div class="ml" style="left:788px;top:210px;font-size:12px;transform:translate(-50%,-50%)">Bhutan</div>
<div class="ml" style="left:389px;top:189px;font-size:12px;transform:translate(-50%,-50%)">Kuwait</div>
<div class="ml" style="left:1110px;top:163px;font-size:14px;transform:translate(-50%,-50%)">Shanghai</div>
<div class="ml" style="left:113px;top:212px;font-size:15px;transform:translate(-50%,-50%)">Libya</div>
<div class="ml" style="left:224px;top:219px;font-size:15px;transform:translate(-50%,-50%)">Egypt</div>
<div class="ml" style="left:361px;top:250px;font-size:15px;transform:translate(-50%,-50%)">Saudi Arabia</div>
<div class="ml" style="left:542px;top:248px;font-size:14px;transform:translate(-50%,-50%)">Karachi</div>
<div class="ml" style="left:677px;top:262px;font-size:15px;transform:translate(-50%,-50%)">India</div>
<div class="ml" style="left:785px;top:241px;font-size:15px;transform:translate(-50%,-50%)">Bangladesh</div>
<div class="ml" style="left:1001px;top:245px;font-size:14px;transform:translate(-50%,-50%)">Guangzhou</div>
<div class="ml" style="left:1072px;top:247px;font-size:12px;transform:translate(-50%,-50%)">Taiwan</div>
<div class="ml" style="left:477px;top:270px;font-size:15px;transform:translate(-50%,-50%)">Oman</div>
<div class="ml" style="left:590px;top:288px;font-size:14px;transform:translate(-50%,-50%)">Mumbai</div>
<div class="ml" style="left:902px;top:285px;font-size:15px;transform:translate(-50%,-50%)">Laos</div>
<div class="ml" style="left:33px;top:310px;font-size:15px;transform:translate(-50%,-50%)">Niger</div>
<div class="ml" style="left:119px;top:329px;font-size:15px;transform:translate(-50%,-50%)">Chad</div>
<div class="ml" style="left:305px;top:327px;font-size:12px;transform:translate(-50%,-50%)">Eritrea</div>
<div class="ml" style="left:389px;top:324px;font-size:15px;transform:translate(-50%,-50%)">Yemen</div>
<div class="ml" style="left:225px;top:344px;font-size:15px;transform:translate(-50%,-50%)">Sudan</div>
<div class="ml" style="left:955px;top:340px;font-size:15px;transform:translate(-50%,-50%)">Vietnam</div>
<div class="ml" style="left:1047px;top:331px;font-size:14px;transform:translate(-50%,-50%)">Manila</div>
<div class="ml" style="left:1092px;top:365px;font-size:15px;transform:translate(-50%,-50%)">Philippines</div>
<div class="ml" style="left:341px;top:365px;font-size:12px;transform:translate(-50%,-50%)">Djibouti</div>
<div class="ml" style="left:24px;top:385px;font-size:15px;transform:translate(-50%,-50%)">Nigeria</div>
<div class="ml" style="left:315px;top:394px;font-size:15px;transform:translate(-50%,-50%)">Ethiopia</div>
<div class="ml" style="left:225px;top:406px;font-size:15px;transform:translate(-50%,-50%)">South Sudan</div>
<div class="ml" style="left:702px;top:404px;font-size:14px;transform:translate(-50%,-50%)">Sri Lanka</div>
<div class="ml" style="left:386px;top:420px;font-size:15px;transform:translate(-50%,-50%)">Somalia</div>
<div class="ml" style="left:59px;top:430px;font-size:15px;transform:translate(-50%,-50%)">Cameroon</div>
<div class="ml" style="left:898px;top:432px;font-size:15px;transform:translate(-50%,-50%)">Malaysia</div>
<div class="ml" style="left:1040px;top:432px;font-size:12px;transform:translate(-50%,-50%)">Brunei</div>
<div class="ml" style="left:629px;top:444px;font-size:14px;transform:translate(-50%,-50%)">Maldives</div>
<div class="ml" style="left:95px;top:471px;font-size:12px;transform:translate(-50%,-50%)">Republic of</div>
<div class="ml" style="left:95px;top:486px;font-size:12px;transform:translate(-50%,-50%)">the Congo</div>
<div class="ml" style="left:247px;top:464px;font-size:12px;transform:translate(-50%,-50%)">Uganda</div>
<div class="ml" style="left:317px;top:500px;font-size:14px;transform:translate(-50%,-50%)">Nairobi</div>
<div class="ml" style="left:1039px;top:496px;font-size:15px;transform:translate(-50%,-50%)">Indonesia</div>
<div class="ml" style="left:270px;top:533px;font-size:15px;transform:translate(-50%,-50%)">Tanzania</div>
<div class="ml" style="left:970px;top:526px;font-size:14px;transform:translate(-50%,-50%)">Jakarta</div>
<div class="ml" style="left:69px;top:548px;font-size:14px;transform:translate(-50%,-50%)">Luanda</div>
<div class="ml" style="left:112px;top:588px;font-size:15px;transform:translate(-50%,-50%)">Angola</div>
<div class="ml" style="left:260px;top:600px;font-size:12px;transform:translate(-50%,-50%)">Malawi</div>
<div class="ml" style="left:201px;top:606px;font-size:15px;transform:translate(-50%,-50%)">Zambia</div>
<div class="ml" style="left:225px;top:657px;font-size:15px;transform:translate(-50%,-50%)">Zimbabwe</div>
<div class="ml" style="left:381px;top:659px;font-size:15px;transform:translate(-50%,-50%)">Madagascar</div>
<div class="ml" style="left:485px;top:668px;font-size:12px;transform:translate(-50%,-50%)">Mauritius</div>
<div class="ml" style="left:108px;top:677px;font-size:15px;transform:translate(-50%,-50%)">Namibia</div>
<div class="ml" style="left:158px;top:723px;font-size:14px;transform:translate(-50%,-50%)">Johannesburg</div>
<div class="ml" style="left:1202px;top:723px;font-size:17px;transform:translate(-50%,-50%)">Australia</div>
<div class="ml" style="left:535px;top:341px;font-size:14px;letter-spacing:2.2px;text-align:center;line-height:20px;transform:translate(-50%,-50%)">Arabian<br>Sea</div>
<div class="ml" style="left:690px;top:702px;font-size:28px;letter-spacing:8px;text-align:center;line-height:38.5px;transform:translate(-50%,-50%);color:#adc3d6;padding-left:8px">Indian<br>Ocean</div>
<div class="cl" style="left:642px;top:168px;transform:translate(-50%,-50%)">Amritsar</div>
<div class="cl" style="left:699px;top:219px;transform:translate(-50%,-50%)">Lucknow</div>
<div class="cl" style="left:621px;top:259px;transform:translate(-50%,-50%)">Ahmedabad</div>
<div class="cl" style="left:624px;top:298px;transform:translate(-50%,-50%)">Mumbai</div>
<div class="cl" style="left:797px;top:254px;transform:translate(-50%,-50%)">Udaipur</div>
<div class="cl" style="left:668px;top:357px;transform:translate(-50%,-50%)">Bangalore</div>
<div class="cl" style="left:662px;top:400px;transform:translate(-50%,-50%)">Thiruvananthapuram</div>
<div class="cl" style="left:1095px;top:350px;transform:translate(-50%,-50%)">Goa</div>
<div class="a" style="left:1185px;top:661px;width:35px;height:70px;background:#fff;border-radius:3px;box-shadow:0 0 6px rgba(0,0,0,.12)"></div>
<div class="a" style="left:1185px;top:695px;width:35px;height:1px;background:#e4e4e4"></div>
<div class="a" style="left:1195px;top:671px"><svg width="14" height="14" viewBox="0 0 14 14"><path d="M7 0V14M0 7H14" stroke="#444" stroke-width="1.4"/></svg></div>
<div class="a" style="left:1195px;top:713px"><svg width="14" height="2" viewBox="0 0 14 2"><path d="M0 1H14" stroke="#444" stroke-width="1.4"/></svg></div>
</div>
<div class="a" style="left:1521px;top:882px"><svg width="17" height="17" viewBox="0 0 17 17"><path d="M10.4 1.2L16 6.6L12.6 9.9L11.7 15.1L2.2 6.3L7.1 5.3Z" fill="#222" stroke="#222" stroke-width=".6" stroke-linejoin="round"/><path d="M6.2 11.2L1.3 15.8" stroke="#222" stroke-width="1.7"/></svg></div>
<div class="a" style="left:1541px;top:883px"><svg width="11" height="14" viewBox="0 0 11 14"><ellipse cx="5.5" cy="2" rx="4.3" ry="1.3" stroke="#3d94f0" stroke-width="1" fill="none"/><ellipse cx="5.5" cy="12" rx="4.3" ry="1.3" stroke="#3d94f0" stroke-width="1" fill="none"/><path d="M1.2 2Q1.5 5 4 6.5Q4.5 7 4 7.5Q1.5 9 1.2 12 M9.8 2Q9.5 5 7 6.5Q6.5 7 7 7.5Q9.5 9 9.8 12" stroke="#3d94f0" stroke-width="1" fill="none"/></svg></div>
<!-- RIGHT PANEL -->
<div class="a" style="left:1565px;top:58px;width:346px;height:848px;border:1px solid #dcdcdc;background:#fff"></div>
<div class="a" style="left:1592px;top:67px"><svg width="15" height="14" viewBox="0 0 15 14"><path d="M1 0V13H15" stroke="#222" stroke-width="1.6" fill="none"/><path d="M3 11V7L6 3L9 6L12 3.5L14 6V11Z" fill="#222"/></svg></div>
<div class="a t" style="left:1621px;top:66px;font-size:17.3px;color:#222">Visualization</div>
<div class="a" style="left:1770px;top:72px"><svg width="16" height="3" viewBox="0 0 16 3"><circle cx="1.5" cy="1.5" r="1.3" fill="#1a8cff"/><circle cx="7.8" cy="1.5" r="1.3" fill="#1a8cff"/><circle cx="14.1" cy="1.5" r="1.3" fill="#1a8cff"/></svg></div>
<div class="a" style="left:1566px;top:89px;width:327px;height:1px;background:#ececec"></div>
<div class="a" style="left:1769px;top:89px;width:17px;height:2px;background:#1a8cff"></div>
<div class="a t" style="left:1591px;top:110px;font-size:17px;color:#222">Axis</div>
<div class="a" style="left:1675px;top:116px"><svg width="16" height="3" viewBox="0 0 16 3"><circle cx="1.5" cy="1.5" r="1.3" fill="#1a8cff"/><circle cx="7.8" cy="1.5" r="1.3" fill="#1a8cff"/><circle cx="14.1" cy="1.5" r="1.3" fill="#1a8cff"/></svg></div>
<div class="a" style="left:1566px;top:147px;width:197px;height:1px;background:#ececec"></div>
<div class="a" style="left:1673px;top:146px;width:18px;height:2px;background:#1a8cff"></div>
<div class="a" style="left:1785px;top:110px"><svg width="17" height="17" viewBox="0 0 17 17"><path d="M5 1V16 M1 12L5 16 M12 16V1 M12 1L16 5" stroke="#222" stroke-width="1.7" fill="none"/></svg></div>
<div class="a" style="left:1852px;top:109px"><svg width="18" height="18" viewBox="0 0 18 18"><circle cx="7" cy="7" r="5.8" stroke="#222" stroke-width="1.8" fill="none"/><path d="M11.2 11.2L17 17" stroke="#222" stroke-width="2"/></svg></div>

<div class="a t" style="left:1576px;top:164px;font-size:17.4px;font-weight:bold;color:#222">Map Style</div>
<div class="a" style="left:1714px;top:158px;width:186px;height:30px;border:1px solid #d2d2d2;border-radius:2px;background:#fff"></div>
<div class="a t" style="left:1724px;top:163px;font-size:17.5px;color:#222">Light</div>
<div class="a" style="left:1873px;top:168px"><svg width="13" height="8" viewBox="0 0 13 8"><path d="M1 1L6.5 7L12 1" stroke="#999" stroke-width="1.2" fill="none"/></svg></div>

<div class="a" style="left:1566px;top:198px;width:344px;height:51px;background:#f4f4f4"></div>
<div class="a t" style="left:1576px;top:214px;font-size:17.2px;font-weight:bold;color:#222">Longitude</div>
<div class="a" style="left:1714px;top:209px;width:186px;height:29px;border:1px solid #d2d2d2;border-radius:2px;background:#fff"></div>
<div class="a t" style="left:1724px;top:214px;font-size:17px;color:#222">71.796980</div>

<div class="a t" style="left:1576px;top:265px;font-size:17.2px;font-weight:bold;color:#222">Latitude</div>
<div class="a" style="left:1714px;top:259px;width:186px;height:30px;border:1px solid #d2d2d2;border-radius:2px;background:#fff"></div>
<div class="a t" style="left:1724px;top:265px;font-size:17px;color:#222">11.562718</div>

<div class="a" style="left:1566px;top:299px;width:344px;height:51px;background:#f4f4f4"></div>
<div class="a t" style="left:1576px;top:315px;font-size:17.2px;font-weight:bold;color:#222">Zoom</div>
<div class="a" style="left:1714px;top:310px;width:186px;height:29px;border:1px solid #d2d2d2;border-radius:2px;background:#fff"></div>
<div class="a t" style="left:1724px;top:315px;font-size:17px;color:#222">2.39</div>

<div class="a" style="left:1698px;top:841px;width:84px;height:40px;background:#42a5f5;border-radius:2px;box-shadow:0 1px 2px rgba(0,0,0,.08)"></div>
<div class="a t" style="left:1718px;top:852px;font-size:17.6px;color:#fff">Apply</div>
<div class="a" style="left:1802px;top:841px;width:84px;height:40px;border:1px solid #d0d0d0;border-radius:2px;background:#fff"></div>
<div class="a t" style="left:1822px;top:852px;font-size:17px;color:#222">Reset</div>
<div class="a" style="left:1888px;top:882px"><svg width="17" height="17" viewBox="0 0 17 17"><path d="M10.4 1.2L16 6.6L12.6 9.9L11.7 15.1L2.2 6.3L7.1 5.3Z" fill="#222" stroke="#222" stroke-width=".6" stroke-linejoin="round"/><path d="M6.2 11.2L1.3 15.8" stroke="#222" stroke-width="1.7"/></svg></div>
</body></html>
